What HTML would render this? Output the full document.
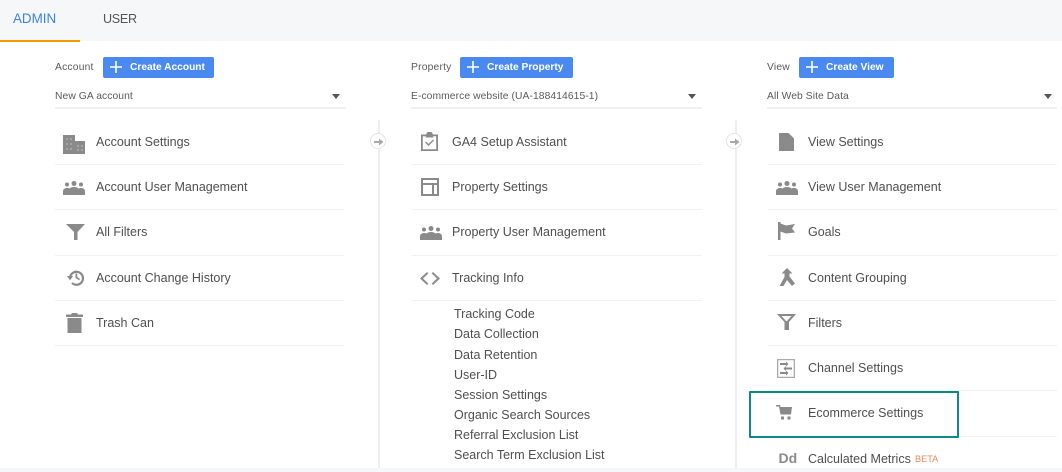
<!DOCTYPE html>
<html><head><meta charset="utf-8">
<style>
html,body{margin:0;padding:0;background:#fff}
#p{position:relative;width:1062px;height:472px;overflow:hidden;background:#fff;font-family:"Liberation Sans",sans-serif;color:#5a5a5a;filter:blur(.3px)}
#p div,#p svg{position:absolute}
.t{font-size:12.5px;line-height:16px;white-space:nowrap;color:#4f4f4f}
.s{font-size:10.3px;line-height:14px;white-space:nowrap;letter-spacing:.2px;color:#5a5a5a}
.d{font-size:10.3px;line-height:14px;white-space:nowrap;letter-spacing:.08px;color:#5a5a5a}
.h{height:1px;background:#f2f2f2}
.u{height:2px;background:#f0f0f0}
.b{height:21px;background:#4a8af0;border-radius:2px;color:#fff;font-size:10.2px;font-weight:bold;line-height:21px;white-space:nowrap}
.b span{position:absolute;left:27px;top:0}
.v{width:2px;background:#eeeeee}
.c{width:14px;height:14px;border:1.500px solid #e3e3e3;border-radius:50%;background:#fff}
svg{fill:#8a8a8a}
</style></head><body><div id="p">
<div style="left:0;top:0;width:1062px;height:41px;background:#f6f7f9"></div>
<div style="left:0;top:40px;width:80px;height:2px;background:#f59a00"></div>
<div style="left:13px;top:10px;font-size:13.4px;line-height:18px;color:#3b82e8">ADMIN</div>
<div style="left:103px;top:10px;font-size:12.6px;line-height:18px;letter-spacing:-.3px;color:#555">USER</div>
<div style="left:0;top:468px;width:1062px;height:4px;background:#f6f7f9"></div>

<div class="s" style="left:55px;top:61px">Account</div>
<div class="b" style="left:103px;top:57px;width:111px"><svg style="left:7px;top:4px" width="12" height="12" viewBox="0 0 12 12"><path fill="#fff" d="M5.2 0h1.600v5.200H12v1.600H6.800V12H5.200V6.800H0V5.200h5.200z"/></svg><span>Create Account</span></div>
<div class="d" style="left:55px;top:90px">New GA account</div>
<svg style="left:332px;top:94px" width="8" height="5" viewBox="0 0 8 5"><path fill="#555" d="M0 0h8L4 5z"/></svg>
<div class="u" style="left:55px;top:107px;width:291px"></div>

<div class="s" style="left:411px;top:61px">Property</div>
<div class="b" style="left:460px;top:57px;width:113px"><svg style="left:7px;top:4px" width="12" height="12" viewBox="0 0 12 12"><path fill="#fff" d="M5.2 0h1.600v5.200H12v1.600H6.800V12H5.200V6.800H0V5.200h5.200z"/></svg><span>Create Property</span></div>
<div class="d" style="left:411px;top:90px">E-commerce website (UA-188414615-1)</div>
<svg style="left:688px;top:94px" width="8" height="5" viewBox="0 0 8 5"><path fill="#555" d="M0 0h8L4 5z"/></svg>
<div class="u" style="left:411px;top:107px;width:291px"></div>

<div class="s" style="left:767px;top:61px">View</div>
<div class="b" style="left:799px;top:57px;width:95px"><svg style="left:7px;top:4px" width="12" height="12" viewBox="0 0 12 12"><path fill="#fff" d="M5.2 0h1.600v5.200H12v1.600H6.800V12H5.200V6.800H0V5.200h5.200z"/></svg><span>Create View</span></div>
<div class="d" style="left:767px;top:90px">All Web Site Data</div>
<svg style="left:1044px;top:94px" width="8" height="5" viewBox="0 0 8 5"><path fill="#555" d="M0 0h8L4 5z"/></svg>
<div class="u" style="left:767px;top:107px;width:290px"></div>

<div class="v" style="left:378px;top:120px;height:348px"></div>
<div class="c" style="left:370px;top:133px"></div>
<svg style="left:373.500px;top:137px" width="10" height="10" viewBox="0 0 10 10"><path fill="#a8a8a8" d="M0 4h5V1.500L9.500 5 5 8.500V6H0z"/></svg>
<div class="v" style="left:735px;top:120px;height:348px"></div>
<div class="c" style="left:726px;top:133px"></div>
<svg style="left:729.500px;top:137px" width="10" height="10" viewBox="0 0 10 10"><path fill="#a8a8a8" d="M0 4h5V1.500L9.500 5 5 8.500V6H0z"/></svg>

<!-- column 1 -->
<svg style="left:63px;top:135px" width="22" height="19" viewBox="0 0 22 19"><path d="M0 0h12v6h10v13H0z"/><path fill="#a6a6a6" d="M3 3h2v2H3zM7 3h2v2H7zM3 8h2v2H3zM7 8h2v2H7zM3 13h2v2H3zM7 13h2v2H7zM14 10h2v2h-2zM18 10h2v2h-2zM14 14h2v2h-2zM18 14h2v2h-2z"/></svg>
<div class="t" style="left:96px;top:134px">Account Settings</div>
<div class="h" style="left:55px;top:164px;width:289px"></div>
<svg style="left:63px;top:181px" width="22" height="14" viewBox="0 0 22 14"><circle cx="4" cy="3.500" r="2"/><circle cx="11" cy="2.500" r="2.500"/><circle cx="18" cy="3.500" r="2"/><path d="M0 14v-3.500C0 8 2 7 4 7c1 0 2 .3 2.500.6C7.500 6.600 9 6 11 6s3.500.6 4.500 1.600C16 7.300 17 7 18 7c2 0 4 1 4 3.500V14z"/></svg>
<div class="t" style="left:96px;top:179px">Account User Management</div>
<div class="h" style="left:55px;top:209px;width:289px"></div>
<svg style="left:65.500px;top:224px" width="19" height="16" viewBox="0 0 19 16"><path d="M0 0h19l-7.500 8v8H8V8z"/></svg>
<div class="t" style="left:96px;top:224px">All Filters</div>
<div class="h" style="left:55px;top:255px;width:289px"></div>
<svg style="left:67px;top:269px" width="17" height="17" viewBox="0 0 17 17"><path fill="none" stroke="#8a8a8a" stroke-width="2.200" d="M3 8.500A6.500 6.500 0 1 1 5 14"/><path d="M0 7h6.200L3 11.200z"/><path d="M8.500 4.500h1.800v3.600l2.700 1.600-.9 1.500-3.600-2.200z"/></svg>
<div class="t" style="left:96px;top:270px">Account Change History</div>
<div class="h" style="left:55px;top:300px;width:289px"></div>
<svg style="left:66px;top:313px" width="17" height="20" viewBox="0 0 17 20"><path d="M6 0h5l1 1.500h5v2.500H0V1.500h5zM1.500 5h14v15h-14z"/></svg>
<div class="t" style="left:96px;top:315px">Trash Can</div>
<div class="h" style="left:55px;top:345px;width:289px"></div>

<!-- column 2 -->
<svg style="left:421px;top:132px" width="17" height="19" viewBox="0 0 17 19"><path fill-rule="evenodd" d="M0 2.500h5L6.500 0h4L12 2.500h5V19H0zM1.800 4.300v12.900h13.400V4.300h-3v1.200H4.800V4.300z"/><path d="M4 10.500l1-1 2.500 2.500 4.500-4.500 1 1L7.500 14z"/></svg>
<div class="t" style="left:452px;top:134px">GA4 Setup Assistant</div>
<div class="h" style="left:412px;top:164px;width:290px"></div>
<svg style="left:421px;top:178px" width="18" height="18" viewBox="0 0 18 18"><path fill-rule="evenodd" d="M0 0h18v18H0zM2 2v3h14V2zM2 7v9h9V7zM13 7v9h3V7z"/></svg>
<div class="t" style="left:452px;top:179px">Property Settings</div>
<div class="h" style="left:412px;top:209px;width:290px"></div>
<svg style="left:420px;top:226px" width="22" height="14" viewBox="0 0 22 14"><circle cx="4" cy="3.500" r="2"/><circle cx="11" cy="2.500" r="2.500"/><circle cx="18" cy="3.500" r="2"/><path d="M0 14v-3.500C0 8 2 7 4 7c1 0 2 .3 2.500.6C7.500 6.600 9 6 11 6s3.500.6 4.500 1.600C16 7.300 17 7 18 7c2 0 4 1 4 3.500V14z"/></svg>
<div class="t" style="left:452px;top:224px">Property User Management</div>
<div class="h" style="left:412px;top:255px;width:290px"></div>
<svg style="left:420px;top:272px" width="20" height="13" viewBox="0 0 20 13"><path d="M7 0l1.300 1.400L3 6.500l5.300 5.100L7 13 0 6.500zM13 0l-1.300 1.400L17 6.500l-5.300 5.100L13 13l7-6.500z"/></svg>
<div class="t" style="left:452px;top:270px">Tracking Info</div>
<div class="h" style="left:412px;top:300px;width:290px"></div>
<div class="t" style="left:454px;top:306px">Tracking Code</div>
<div class="t" style="left:454px;top:326px">Data Collection</div>
<div class="t" style="left:454px;top:347px">Data Retention</div>
<div class="t" style="left:454px;top:367px">User-ID</div>
<div class="t" style="left:454px;top:387px">Session Settings</div>
<div class="t" style="left:454px;top:407px">Organic Search Sources</div>
<div class="t" style="left:454px;top:427px">Referral Exclusion List</div>
<div class="t" style="left:454px;top:447px">Search Term Exclusion List</div>

<!-- column 3 -->
<svg style="left:779px;top:133px" width="15" height="18" viewBox="0 0 15 18"><path d="M0 0h9.500L15 5.500V18H0z"/></svg>
<div class="t" style="left:808px;top:134px">View Settings</div>
<div class="h" style="left:768px;top:164px;width:289px"></div>
<svg style="left:776px;top:181px" width="22" height="14" viewBox="0 0 22 14"><circle cx="4" cy="3.500" r="2"/><circle cx="11" cy="2.500" r="2.500"/><circle cx="18" cy="3.500" r="2"/><path d="M0 14v-3.500C0 8 2 7 4 7c1 0 2 .3 2.500.6C7.500 6.600 9 6 11 6s3.500.6 4.500 1.600C16 7.300 17 7 18 7c2 0 4 1 4 3.500V14z"/></svg>
<div class="t" style="left:808px;top:179px">View User Management</div>
<div class="h" style="left:768px;top:209px;width:289px"></div>
<svg style="left:778px;top:222px" width="17" height="18" viewBox="0 0 17 18"><path d="M0 0h2.500v1.500L8 3.500 17 2l-3 4.500 3 4-9 1-5.500-2V18H0z"/></svg>
<div class="t" style="left:808px;top:224px">Goals</div>
<div class="h" style="left:768px;top:255px;width:289px"></div>
<svg style="left:779px;top:268px" width="16" height="18" viewBox="0 0 16 18"><path d="M8 0l5.500 5.500h-3v3L16 15.500 13 18 8 12 4.500 18H.5L5.500 9V5.500h-3z"/></svg>
<div class="t" style="left:808px;top:270px">Content Grouping</div>
<div class="h" style="left:768px;top:300px;width:289px"></div>
<svg style="left:777px;top:314px" width="19" height="16" viewBox="0 0 19 16"><path fill-rule="evenodd" d="M0 0h19l-7 8v8H7.500V8zM4.500 2l4.500 5h1l4.500-5z"/></svg>
<div class="t" style="left:808px;top:315px">Filters</div>
<div class="h" style="left:768px;top:345px;width:289px"></div>
<svg style="left:777px;top:359px" width="18" height="19" viewBox="0 0 18 19"><path fill="#ababab" fill-rule="evenodd" d="M0 0h18v19H0zM1.300 1.300v16.400h15.400V1.300z"/><path d="M3 4h6V2.500L11.500 5 9 7.500V6H3zM15 8.500H9V7l-2.500 2.500L9 12v-1.500h6zM3 13h6v-1.500l2.500 2.500L9 16.500V15H3z"/></svg>
<div class="t" style="left:808px;top:360px">Channel Settings</div>
<div class="h" style="left:768px;top:390px;width:289px"></div>
<svg style="left:776px;top:405px" width="16" height="15" viewBox="0 0 16 15"><path d="M0 0h4l.5 2H16l-1 7.500H4.500L3 1.500H0z"/><path d="M5 11.500h3v3H5zM11.500 11.500h3v3h-3z"/></svg>
<div class="t" style="left:808px;top:405px">Ecommerce Settings</div>
<div class="h" style="left:768px;top:436px;width:289px"></div>
<div style="left:778.500px;top:450px;font-size:14px;line-height:17px;font-weight:bold;color:#8a8a8a">Dd</div>
<div class="t" style="left:808px;top:451px">Calculated Metrics</div>
<div style="left:915px;top:452px;font-size:9.200px;line-height:15px;color:#ea8a5e">BETA</div>

<div style="left:749px;top:391px;width:206px;height:43px;border:2px solid #0e8a85;border-radius:1px"></div>
</div></body></html>
